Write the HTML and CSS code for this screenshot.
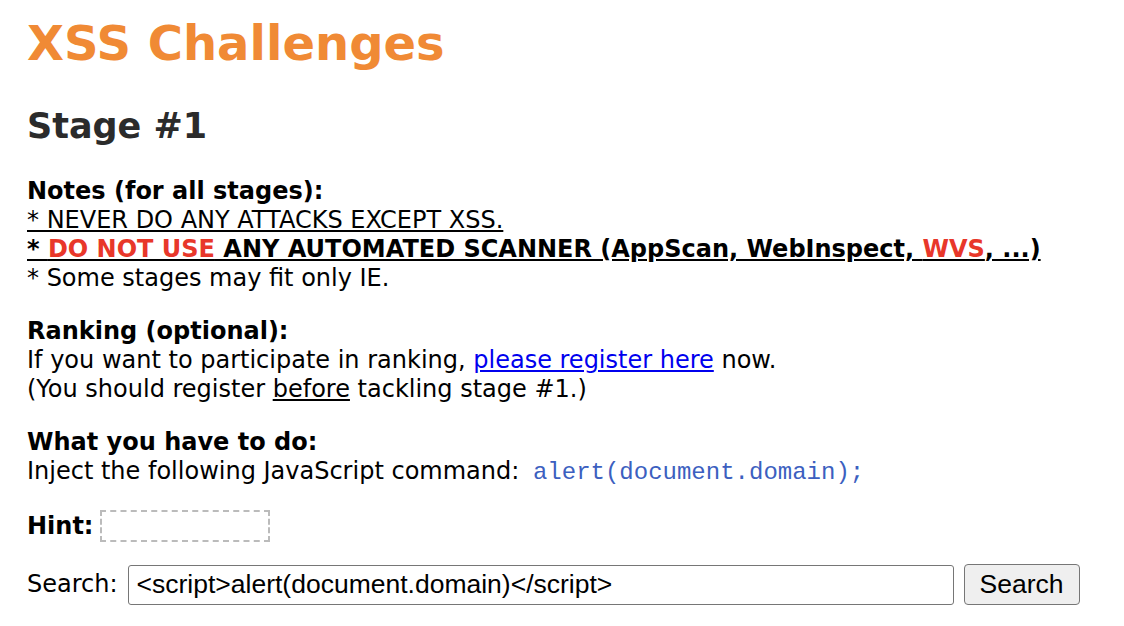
FILE: index.html
```html
<!DOCTYPE html>
<html>
<head>
<meta charset="utf-8">
<title>XSS Challenges</title>
<link rel="stylesheet" href="styles.css">
</head>
<body>
<h1 class="title">XSS Challenges</h1>
<h2 class="stage">Stage #1</h2>
<p class="block">
<b>Notes (for all stages):</b><br>
<u>* NEVER DO ANY ATTACKS EXCEPT XSS.</u><br>
<u><b>* <span class="red">DO NOT USE</span> ANY AUTOMATED SCANNER (AppScan, WebInspect, <span class="red">WVS</span>, ...)</b></u><br>
* Some stages may fit only IE.
</p>
<p class="block">
<b>Ranking (optional):</b><br>
If you want to participate in ranking, <a href="#">please register here</a> now.<br>
(You should register <u>before</u> tackling stage #1.)
</p>
<p class="block">
<b>What you have to do:</b><br>
Inject the following JavaScript command: <code class="code">alert(document.domain);</code>
</p>
<div class="hint-row"><b>Hint:</b><span class="hint-box"></span></div>
<form class="search-row">
<label class="search-label">Search:</label>
<input class="search-input" type="text" value="&lt;script&gt;alert(document.domain)&lt;/script&gt;">
<button class="search-btn" type="button">Search</button>
</form>
</body>
</html>
```
FILE: styles.css
```css
html, body {
  margin: 0;
  padding: 0;
  background: #fff;
}
body {
  padding: 0 27px;
  font-family: "DejaVu Sans", Verdana, sans-serif;
  font-size: 24px;
  line-height: 29px;
  color: #000;
}
.title {
  margin: 15px 0 0;
  font-size: 48px;
  line-height: 56px;
  color: #f08a35;
  font-weight: bold;
}
.stage {
  margin: 34px 0 0;
  font-size: 35px;
  line-height: 42px;
  color: #2b2b2b;
}
.block {
  margin: 30px 0 0;
}
.block + .block {
  margin-top: 24px;
}
.red {
  color: #e8372a;
}
a {
  color: #0000ee;
}
.code {
  font-family: "Liberation Mono", "Courier New", monospace;
  color: #3c5fc0;
  font-size: 24px;
  margin-left: 6px;
}
.hint-row {
  margin-top: 23px;
  display: flex;
  align-items: center;
  gap: 7px;
}
.hint-box {
  display: inline-block;
  width: 166px;
  height: 28px;
  border: 2px dashed #bbb;
}
.search-row {
  margin-top: 22px;
  display: flex;
  align-items: center;
}
.search-label {
  margin-right: 10px;
}
.search-input {
  width: 826px;
  height: 40px;
  box-sizing: border-box;
  border: 1px solid #767676;
  border-radius: 3px;
  padding: 0 8px;
  font-family: "Liberation Sans", Arial, sans-serif;
  font-size: 26.5px;
  color: #000;
}
.search-btn {
  margin-left: 10px;
  width: 116px;
  height: 41px;
  border: 1px solid #767676;
  border-radius: 4px;
  background: #efefef;
  font-family: "Liberation Sans", Arial, sans-serif;
  font-size: 26.5px;
  color: #000;
  padding: 0;
}
```
